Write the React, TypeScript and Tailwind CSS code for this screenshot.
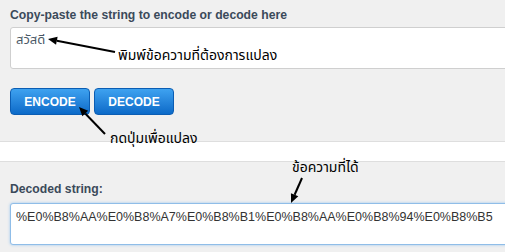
import React from "react";

const thai = { fontFamily: '"Noto Sans Thai", Tahoma, "Noto Sans", "DejaVu Sans", sans-serif' };

const Arrow: React.FC<{ x1: number; y1: number; x2: number; y2: number }> = ({ x1, y1, x2, y2 }) => {
  // arrow head at (x2, y2)
  const a = Math.atan2(y2 - y1, x2 - x1);
  const len = 9;
  const w = 4;
  const bx = x2 - len * Math.cos(a);
  const by = y2 - len * Math.sin(a);
  const p1 = `${bx + w * Math.sin(a)},${by - w * Math.cos(a)}`;
  const p2 = `${bx - w * Math.sin(a)},${by + w * Math.cos(a)}`;
  return (
    <g>
      <line x1={x1} y1={y1} x2={bx} y2={by} stroke="#000" strokeWidth={2} />
      <polygon points={`${x2},${y2} ${p1} ${p2}`} fill="#000" />
    </g>
  );
};

const Button: React.FC<{ label: string }> = ({ label }) => (
  <button className="h-[27px] w-[80px] rounded-[4px] border border-[#0b5db3] bg-gradient-to-b from-[#3ea2f0] to-[#0b6ac8] text-[12px] font-bold text-white">
    {label}
  </button>
);

export default function App() {
  return (
    <div
      className="relative h-[252px] w-[505px] overflow-hidden bg-[#f0f0f0]"
      style={{ fontFamily: '"Liberation Sans", Arial, sans-serif' }}
    >
      <section className="h-[142px] border-b border-[#dedede] pl-[10px] pt-[7px]">
        <label className="block text-[12.2px] font-bold leading-[16px] text-[#3b4a5a]">
          Copy-paste the string to encode or decode here
        </label>
        <div
          className="mt-[4px] h-[42px] w-[510px] rounded-[3px] border border-[#cfcfcf] bg-white px-[5px] pt-[3px] text-[13px] text-[#4a5866]"
          style={thai}
        >
          สวัสดี
        </div>
        <div className="mt-[19px] flex gap-[4px]">
          <Button label="ENCODE" />
          <Button label="DECODE" />
        </div>
      </section>

      <div className="h-[20px] border-b border-[#dedede] bg-white" />

      <section className="pl-[10px] pt-[19px]">
        <label className="block text-[12.2px] font-bold leading-[16px] text-[#3b4a5a]">
          Decoded string:
        </label>
        <div className="mt-[6px] h-[42px] w-[510px] rounded-[3px] border border-[#8fbde8] bg-white px-[5px] pt-[3px] text-[12.5px] leading-[20px] text-[#333] shadow-[0_0_3px_#9cc6ee]">
          %E0%B8%AA%E0%B8%A7%E0%B8%B1%E0%B8%AA%E0%B8%94%E0%B8%B5
        </div>
      </section>

      <span className="absolute left-[118px] top-[46px] text-[14px] leading-[20px] text-black" style={thai}>
        พิมพ์ข้อความที่ต้องการแปลง
      </span>
      <span className="absolute left-[110px] top-[129px] text-[14px] leading-[20px] text-black" style={thai}>
        กดปุ่มเพื่อแปลง
      </span>
      <span className="absolute left-[292px] top-[158px] text-[14px] leading-[20px] text-black" style={thai}>
        ข้อความที่ได้
      </span>

      <svg className="pointer-events-none absolute left-0 top-0" width={505} height={252}>
        <Arrow x1={115} y1={52} x2={48} y2={39} />
        <Arrow x1={105} y1={134} x2={79} y2={107} />
        <Arrow x1={302} y1={178} x2={291} y2={203} />
      </svg>
    </div>
  );
}
